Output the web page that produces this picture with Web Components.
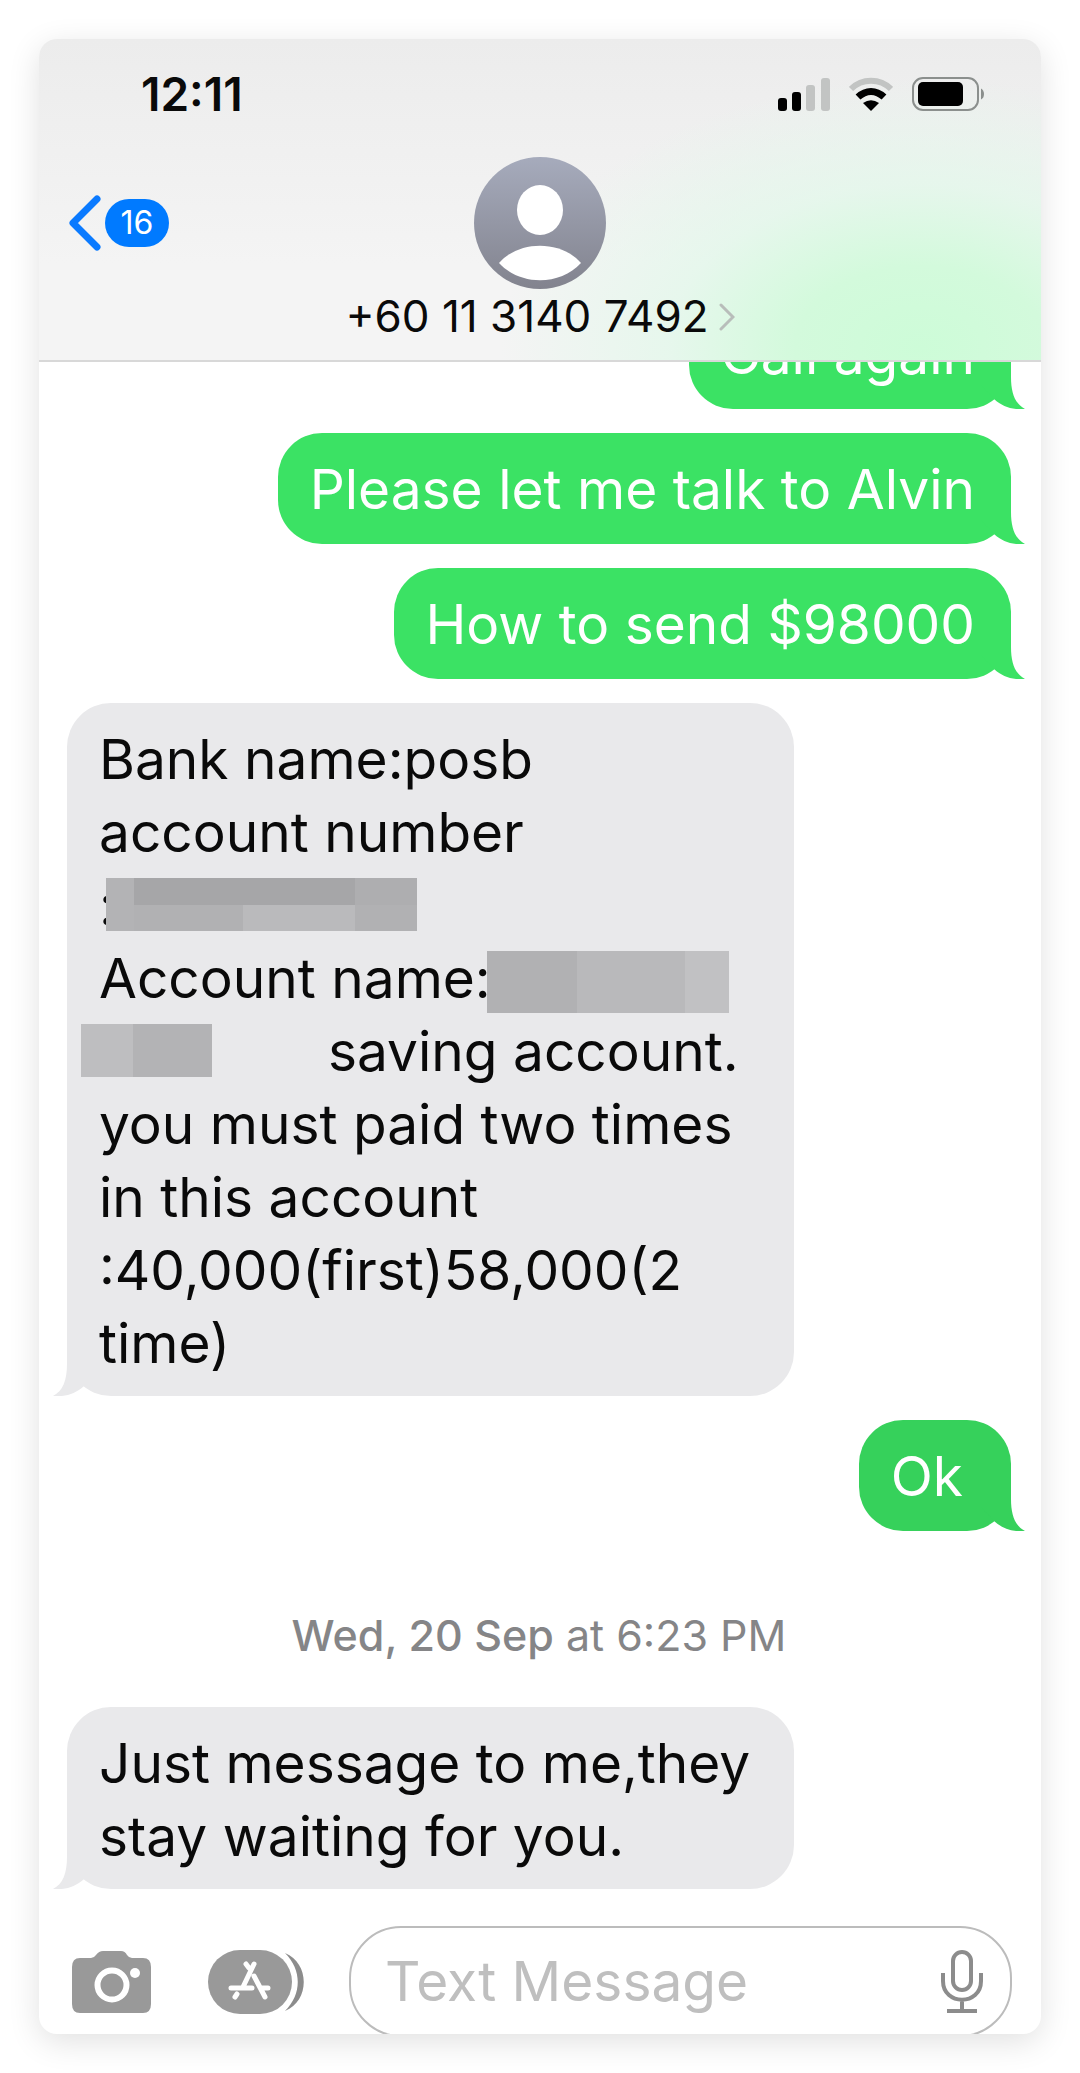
<!DOCTYPE html>
<html lang="en">
<head>
<meta charset="utf-8">
<meta name="viewport" content="width=device-width, initial-scale=1">
<title>Messages</title>
<style>
  * {
    box-sizing: border-box;
  }

  body {
    margin: 0;
    padding: 39px;
    background: #fff;
    color: #0a0a0a;
    font-family: Inter, "Liberation Sans", sans-serif;
  }
</style>
</head>
<body>
<chat-screen>
  <status-bar slot="top" time="12:11"></status-bar>
  <chat-header slot="top" unread="16">+60 11 3140 7492</chat-header>

  <chat-bubble from="me">Call again</chat-bubble>
  <chat-bubble from="me">Please let me talk to Alvin</chat-bubble>
  <chat-bubble from="me">How to send $98000</chat-bubble>
  <chat-bubble from="them">Bank name:posb<br>account number<br>:<redacted-text kind="number"></redacted-text><br>Account name:<redacted-text kind="name"></redacted-text><br><redacted-text kind="surname"></redacted-text>saving account.<br>you must paid two times<br>in this account<br>:40,000(first)58,000(2<br>time)</chat-bubble>
  <chat-bubble from="me" tone="deep">Ok</chat-bubble>
  <date-stamp day="Wed, 20 Sep">at 6:23 PM</date-stamp>
  <chat-bubble from="them">Just message to me,they<br>stay waiting for you.</chat-bubble>

  <chat-composer slot="bottom" placeholder="Text Message"></chat-composer>
</chat-screen>

<script>
class ChatScreen extends HTMLElement {
  constructor() {
    super();
    this.attachShadow({mode: "open"}).innerHTML = `
      <style>
        :host {
          display: block;
          overflow: hidden;
          border-radius: 18px;
          background: #fff;
          box-shadow: 0 8px 32px rgba(0, 0, 0, 0.12);
        }

        header {
          border-bottom: 2px solid #d8d8d8;
          background:
            radial-gradient(ellipse 420px 270px at 88% 96%, #cdfcd8 0%, #d3fadc 30%, rgba(226, 248, 234, 0.75) 60%, rgba(240, 244, 242, 0) 100%),
            linear-gradient(#ececec, #f4f4f4 70%);
        }

        main {
          display: flex;
          flex-direction: column;
          gap: 24px;
          overflow: hidden;
          padding: 0 30px 37px 28px;
        }

        /* the thread is scrolled, so the oldest bubble sits partly under the header */
        ::slotted(chat-bubble:first-of-type) {
          margin-top: -64px;
        }
      </style>
      <header><slot name="top"></slot></header>
      <main><slot></slot></main>
      <slot name="bottom"></slot>
    `;
  }
}

class StatusBar extends HTMLElement {
  connectedCallback() {
    this.attachShadow({mode: "open"}).innerHTML = `
      <style>
        :host {
          display: flex;
          align-items: center;
          justify-content: space-between;
          height: 109px;
          padding: 0 56px 0 102px;
          font-size: 46px;
          font-weight: 600;
        }

        .icons {
          display: flex;
          align-items: center;
          gap: 19px;
        }

        svg {
          display: block;
        }
      </style>
      <time>${this.getAttribute("time")}</time>
      <div class="icons">
        <svg width="52" height="34" viewBox="0 0 52 34">
          <rect x="0" y="21" width="9" height="13" rx="3"/>
          <rect x="14" y="15" width="9" height="19" rx="3"/>
          <rect x="28" y="8" width="9" height="26" rx="3" fill="#c2c4c3"/>
          <rect x="43" y="1" width="9" height="33" rx="3" fill="#c2c4c3"/>
        </svg>
        <svg width="44" height="34" viewBox="0 0 44 34">
          <path d="M2 12C13 1 31 1 42 12" fill="none" stroke="#c2c4c3" stroke-width="6"/>
          <path d="M9 20C17 12.500 27 12.500 35 20" fill="none" stroke="#000" stroke-width="7"/>
          <path d="M14 26Q22 20.500 30 26L22 34Z"/>
        </svg>
        <svg width="73" height="34" viewBox="0 0 73 34">
          <rect x="1" y="1" width="65" height="32" rx="10" fill="none" stroke="#8b8f8d" stroke-width="2"/>
          <rect x="6" y="5" width="45" height="24" rx="5"/>
          <path d="M69 11.500Q72 13 72 17T69 22.500Z" fill="#8b8f8d"/>
        </svg>
      </div>
    `;
  }
}

class ChatHeader extends HTMLElement {
  connectedCallback() {
    this.attachShadow({mode: "open"}).innerHTML = `
      <style>
        :host {
          display: grid;
          grid-template-columns: 1fr auto 1fr;
          padding: 9px 30px 16px;
        }

        button {
          border: 0;
          padding: 0;
          background: none;
          color: inherit;
          font: inherit;
          cursor: pointer;
        }

        svg {
          display: block;
        }

        .back {
          display: flex;
          align-items: center;
          justify-self: start;
          gap: 4px;
          height: 132px;
        }

        .badge {
          width: 64px;
          border-radius: 24px;
          background: #007aff;
          color: #fff;
          font-size: 32px;
          line-height: 48px;
          text-align: center;
        }

        .contact {
          display: flex;
          flex-direction: column;
          align-items: center;
        }

        .number {
          display: flex;
          align-items: center;
          gap: 10px;
          font-size: 44px;
          line-height: 55px;
        }
      </style>
      <button class="back" aria-label="Back, ${this.getAttribute("unread")} unread">
        <svg width="32" height="56" viewBox="0 0 32 56">
          <path d="M28 4L4 28L28 52" fill="none" stroke="#0a7aff" stroke-width="7" stroke-linecap="round" stroke-linejoin="round"/>
        </svg>
        <span class="badge">${this.getAttribute("unread")}</span>
      </button>
      <button class="contact">
        <svg width="132" height="132" viewBox="0 0 132 132">
          <defs>
            <linearGradient id="shade" x2="0" y2="1">
              <stop offset="0" stop-color="#a6abbc"/>
              <stop offset="1" stop-color="#82838e"/>
            </linearGradient>
          </defs>
          <circle cx="66" cy="66" r="66" fill="url(#shade)"/>
          <ellipse cx="66" cy="53" rx="23" ry="25" fill="#fff"/>
          <path d="M25 106C45 83 87 83 107 106C86 129 46 129 25 106Z" fill="#fff"/>
        </svg>
        <span class="number">
          <slot></slot>
          <svg width="16" height="28" viewBox="0 0 16 28">
            <path d="M2 2L14 14L2 26" fill="none" stroke="#b8bdba" stroke-width="3" stroke-linecap="round"/>
          </svg>
        </span>
      </button>
    `;
  }
}

class ChatBubble extends HTMLElement {
  constructor() {
    super();
    this.attachShadow({mode: "open"}).innerHTML = `
      <style>
        :host {
          --fill: #3be264;
          display: block;
          position: relative;
          align-self: flex-end;
          border-radius: 44px;
          padding: 20px 36px 18px 32px;
          background: var(--fill);
          color: #fff;
          font-size: 55px;
          line-height: 73px;
          white-space: nowrap;
        }

        :host([tone="deep"]) {
          --fill: #36d15b;
          padding-right: 48px;
        }

        :host([from="them"]) {
          --fill: #e9e9eb;
          align-self: flex-start;
          min-width: 77%;
          padding: 20px 32px 16px;
          color: #0a0a0a;
        }

        .tail {
          position: absolute;
          right: -14px;
          bottom: 0;
          fill: var(--fill);
        }

        :host([from="them"]) .tail {
          right: auto;
          left: -14px;
          transform: scaleX(-1);
        }
      </style>
      <slot></slot>
      <svg class="tail" width="58" height="44" viewBox="0 0 58 44">
        <path d="M44 0V12C44 28 48 39 58 44C45 45 36 42 27 34L14 20V0Z"/>
      </svg>
    `;
  }
}

class RedactedText extends HTMLElement {
  constructor() {
    super();
    this.attachShadow({mode: "open"}).innerHTML = `
      <style>
        :host {
          display: inline-block;
          height: 53px;
          margin-top: 9px;
          vertical-align: top;
        }

        :host([kind="number"]) {
          width: 311px;
          margin-left: -9px;
          background:
            linear-gradient(90deg, #b3b3b5 9%, #a6a6a8 9% 80%, #aeaeb0 80%) top / 100% 27px no-repeat,
            linear-gradient(90deg, #b3b3b5 9%, #b1b1b3 9% 44%, #bababc 44% 80%, #b1b1b3 80%);
        }

        :host([kind="name"]) {
          width: 242px;
          height: 62px;
          margin-left: -4px;
          background: linear-gradient(90deg, #b1b1b3 37%, #b9b9bb 37% 82%, #c1c1c3 82%);
        }

        :host([kind="surname"]) {
          width: 131px;
          margin: 9px 116px 0 -18px;
          background: linear-gradient(90deg, #bebec0 40%, #b3b3b5 40%);
        }
      </style>
    `;
  }
}

class DateStamp extends HTMLElement {
  connectedCallback() {
    this.attachShadow({mode: "open"}).innerHTML = `
      <style>
        :host {
          display: block;
          padding: 52px 0 20px;
          color: #858587;
          font-size: 43px;
          line-height: 56px;
          text-align: center;
        }

        b {
          font-weight: 500;
        }
      </style>
      <b>${this.getAttribute("day")}</b> <slot></slot>
    `;
  }
}

class ChatComposer extends HTMLElement {
  connectedCallback() {
    this.attachShadow({mode: "open"}).innerHTML = `
      <style>
        /* slightly shorter than its field, whose lower edge runs off the screen */
        :host {
          display: flex;
          align-items: center;
          box-sizing: border-box;
          height: 108px;
          padding: 3px 29px 0 33px;
        }

        button {
          flex: none;
          border: 0;
          padding: 0;
          background: none;
          cursor: pointer;
        }

        svg {
          display: block;
        }

        .apps {
          margin: 0 45px 0 57px;
        }

        .field {
          display: flex;
          flex: 1;
          align-items: center;
          box-sizing: border-box;
          height: 111px;
          min-width: 0;
          border: 2px solid #bcbcbc;
          border-radius: 52px;
          padding: 0 27px 0 34px;
        }

        input {
          flex: 1;
          min-width: 0;
          border: 0;
          outline: 0;
          padding: 0;
          background: none;
          color: #0a0a0a;
          font: inherit;
          font-size: 55px;
          line-height: 73px;
        }

        input::placeholder {
          color: #bfbfbf;
          opacity: 1;
        }
      </style>
      <button aria-label="Camera">
        <svg width="79" height="62" viewBox="0 0 79 62">
          <path d="M8 7H19Q22 7 24 4Q27 0 31 0H49Q53 0 55 4Q57 7 60 7H71Q79 7 79 16V53Q79 62 71 62H8Q0 62 0 53V16Q0 7 8 7Z" fill="#999"/>
          <circle cx="40" cy="34" r="14.500" fill="none" stroke="#fff" stroke-width="6"/>
          <circle cx="63" cy="22" r="5" fill="#fff"/>
        </svg>
      </button>
      <button class="apps" aria-label="Apps">
        <svg width="96" height="64" viewBox="0 0 96 64">
          <path d="M77 3C102 13 102 51 77 61C94 44 94 20 77 3Z" fill="#8c8c8c"/>
          <rect width="84" height="64" rx="32" fill="#999"/>
          <path d="M38 14L41 18M46 14L35 37M23 38H44M46 26L57 47M53 38H60M29 44L27 47" fill="none" stroke="#fff" stroke-width="5" stroke-linecap="round"/>
        </svg>
      </button>
      <div class="field">
        <input type="text" aria-label="${this.getAttribute("placeholder")}" placeholder="${this.getAttribute("placeholder")}">
        <button aria-label="Dictate">
          <svg width="42" height="64" viewBox="0 0 42 64">
            <g fill="none" stroke="#8c8c8c" stroke-width="4">
              <rect x="12" y="2" width="18" height="38" rx="9"/>
              <path d="M2 23V31C2 56 40 56 40 31V23M21 50V61M6 61H36"/>
            </g>
          </svg>
        </button>
      </div>
    `;
  }
}

customElements.define("chat-screen", ChatScreen);
customElements.define("status-bar", StatusBar);
customElements.define("chat-header", ChatHeader);
customElements.define("chat-bubble", ChatBubble);
customElements.define("redacted-text", RedactedText);
customElements.define("date-stamp", DateStamp);
customElements.define("chat-composer", ChatComposer);
</script>
</body>
</html>
